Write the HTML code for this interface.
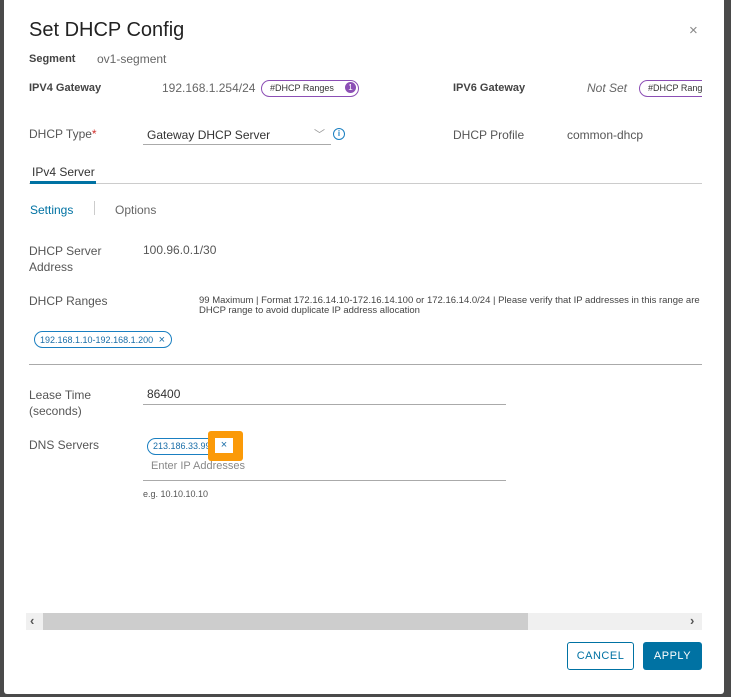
<!DOCTYPE html>
<html><head><meta charset="utf-8"><style>
*{box-sizing:border-box;margin:0;padding:0}
body{width:731px;height:697px;background:#4a4a4a;font-family:"Liberation Sans",sans-serif;position:relative;overflow:hidden;color:#565656}
.m{position:absolute;left:4px;top:0;width:720px;height:694px;background:#fff;border-radius:0 0 3px 3px}
.a{position:absolute;white-space:nowrap}
.b{font-weight:bold;font-size:11px;color:#444}
.l{font-size:12px;color:#565656}
.pill{position:absolute;border:1.5px solid #8c4fb5;border-radius:10px;height:17px;font-size:9px;color:#333;padding:2px 0 0 8px}
.chip{position:absolute;border:1.3px solid #1a7fc1;border-radius:9px;height:17px;font-size:9px;color:#1a6ea8;padding:2px 0 0 5px;white-space:nowrap}
.line{position:absolute;height:1px;background:#aaa}
</style></head><body>
<div class="m"></div>
<div class="a" style="left:29px;top:19px;font-size:20px;color:#222">Set DHCP Config</div>
<div class="a" style="left:689px;top:22px;font-size:15px;color:#888">×</div>
<div class="a b" style="left:29px;top:53px">Segment</div>
<div class="a l" style="left:97px;top:52px;color:#666">ov1-segment</div>
<div class="a b" style="left:29px;top:82px">IPV4 Gateway</div>
<div class="a l" style="left:162px;top:81px;color:#666">192.168.1.254/24</div>
<div class="pill" style="left:261px;top:80px;width:98px">#DHCP Ranges<span style="position:absolute;right:2px;top:1px;width:11px;height:11px;border-radius:50%;background:#8c4fb5;color:#fff;font-size:8px;text-align:center;line-height:11px">1</span></div>
<div class="a b" style="left:453px;top:82px">IPV6 Gateway</div>
<div class="a l" style="left:587px;top:81px;font-style:italic;color:#666">Not Set</div>
<div style="position:absolute;left:639px;top:80px;width:63px;height:17px;overflow:hidden"><div class="pill" style="left:0;top:0;width:98px">#DHCP Ranges</div></div>
<div class="a l" style="left:29px;top:127px">DHCP Type<span style="color:#d0312d">*</span></div>
<div class="a l" style="left:147px;top:128px;color:#333">Gateway DHCP Server</div>
<div class="a" style="left:314px;top:126px;font-size:11px;color:#999">﹀</div>
<div class="line" style="left:143px;top:144px;width:188px"></div>
<div class="a" style="left:333px;top:128px;width:12px;height:12px;border:1.3px solid #1a7fc1;border-radius:50%;font-size:8px;color:#1a7fc1;text-align:center;line-height:10px;font-weight:bold">i</div>
<div class="a l" style="left:453px;top:128px">DHCP Profile</div>
<div class="a l" style="left:567px;top:128px">common-dhcp</div>
<div class="a l" style="left:32px;top:165px;color:#333">IPv4 Server</div>
<div class="line" style="left:29px;top:183px;width:673px;background:#ccc"></div>
<div style="position:absolute;left:30px;top:181px;width:66px;height:3px;background:#0072a3"></div>
<div class="a l" style="left:30px;top:203px;color:#0072a3">Settings</div>
<div style="position:absolute;left:94px;top:201px;width:1px;height:14px;background:#ccc"></div>
<div class="a l" style="left:115px;top:203px;color:#666">Options</div>
<div class="a l" style="left:29px;top:243px;line-height:16px">DHCP Server<br>Address</div>
<div class="a l" style="left:143px;top:243px">100.96.0.1/30</div>
<div class="a l" style="left:29px;top:294px">DHCP Ranges</div>
<div style="position:absolute;left:199px;top:296px;width:503px;height:22px;overflow:hidden"><div class="a" style="left:0;top:0;font-size:9.5px;line-height:10px;color:#444">99 Maximum | Format 172.16.14.10-172.16.14.100 or 172.16.14.0/24 | Please verify that IP addresses in this range are<br>DHCP range to avoid duplicate IP address allocation</div></div>
<div class="chip" style="left:34px;top:331px;width:138px">192.168.1.10-192.168.1.200 <span style="margin-left:3px;font-size:11px">×</span></div>
<div class="line" style="left:29px;top:364px;width:673px"></div>
<div class="a l" style="left:29px;top:387px;line-height:16px">Lease Time<br>(seconds)</div>
<div class="a l" style="left:147px;top:387px;color:#333">86400</div>
<div class="line" style="left:143px;top:404px;width:363px"></div>
<div class="a l" style="left:29px;top:438px">DNS Servers</div>
<div class="chip" style="left:147px;top:438px;width:87px;overflow:hidden">213.186.33.99</div>
<div style="position:absolute;left:208px;top:431px;width:35px;height:30px;background:#fb9a08;border-radius:3px"></div>
<div style="position:absolute;left:215px;top:438px;width:18px;height:15px;background:#fff;color:#1a6ea8;font-size:11px;text-align:center;line-height:15px">×</div>
<div class="a l" style="left:151px;top:460px;color:#888;font-size:11px">Enter IP Addresses</div>
<div class="line" style="left:143px;top:480px;width:363px"></div>
<div class="a" style="left:143px;top:489px;font-size:9px;color:#555">e.g. 10.10.10.10</div>
<div style="position:absolute;left:26px;top:613px;width:676px;height:17px;background:#f0f0f0"></div>
<div style="position:absolute;left:43px;top:613px;width:485px;height:17px;background:#cdcdcd"></div>
<div class="a" style="left:30px;top:613px;font-size:13px;color:#555;font-weight:bold">‹</div>
<div class="a" style="left:690px;top:613px;font-size:13px;color:#555;font-weight:bold">›</div>
<div style="position:absolute;left:567px;top:642px;width:67px;height:28px;border:1px solid #0072a3;border-radius:3px;color:#0072a3;font-size:11px;text-align:center;line-height:26px;letter-spacing:.5px">CANCEL</div>
<div style="position:absolute;left:643px;top:642px;width:59px;height:28px;background:#0072a3;border-radius:3px;color:#fff;font-size:11px;text-align:center;line-height:28px;letter-spacing:.5px">APPLY</div>
</body></html>
